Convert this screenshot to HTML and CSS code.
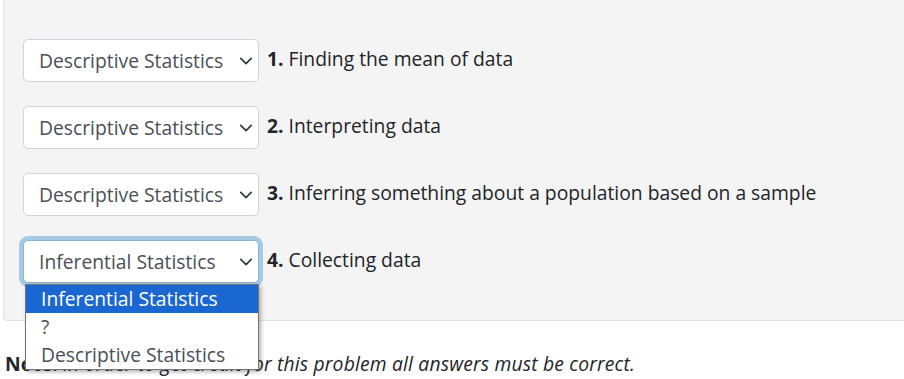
FILE: index.html
```html
<!DOCTYPE html>
<html>
<head>
<meta charset="utf-8">
<link rel="stylesheet" href="styles.css">
</head>
<body>
<div class="panel">
  <div class="row">
    <div class="select"><span class="value">Descriptive Statistics</span><svg class="chev" viewBox="0 0 16 16" width="14" height="14"><path d="M2 5l6 6 6-6" fill="none" stroke="#343a40" stroke-width="2" stroke-linecap="round" stroke-linejoin="round"/></svg></div>
    <div class="label"><b>1.</b> Finding the mean of data</div>
  </div>
  <div class="row">
    <div class="select"><span class="value">Descriptive Statistics</span><svg class="chev" viewBox="0 0 16 16" width="14" height="14"><path d="M2 5l6 6 6-6" fill="none" stroke="#343a40" stroke-width="2" stroke-linecap="round" stroke-linejoin="round"/></svg></div>
    <div class="label"><b>2.</b> Interpreting data</div>
  </div>
  <div class="row">
    <div class="select"><span class="value">Descriptive Statistics</span><svg class="chev" viewBox="0 0 16 16" width="14" height="14"><path d="M2 5l6 6 6-6" fill="none" stroke="#343a40" stroke-width="2" stroke-linecap="round" stroke-linejoin="round"/></svg></div>
    <div class="label"><b>3.</b> Inferring something about a population based on a sample</div>
  </div>
  <div class="row">
    <div class="select-wrap">
      <div class="select focused"><span class="value">Inferential Statistics</span><svg class="chev" viewBox="0 0 16 16" width="14" height="14"><path d="M2 5l6 6 6-6" fill="none" stroke="#343a40" stroke-width="2" stroke-linecap="round" stroke-linejoin="round"/></svg></div>
      <ul class="popup">
        <li class="opt active">Inferential Statistics</li>
        <li class="opt">?</li>
        <li class="opt">Descriptive Statistics</li>
      </ul>
    </div>
    <div class="label"><b>4.</b> Collecting data</div>
  </div>
</div>
<p class="note"><b>Note:</b> <i>In order to get credit for this problem all answers must be correct.</i></p>
</body>
</html>
```
FILE: styles.css
```css
html, body {
  margin: 0;
  padding: 0;
  background: #fff;
  overflow: hidden;
}
body {
  font-family: "Open Sans", "Noto Sans", sans-serif;
  font-size: 19.3px;
  color: #212529;
}
.panel {
  margin-left: 3px;
  background: #f4f4f4;
  border-left: 1px solid #e1e1e1;
  border-bottom: 1px solid #e1e1e1;
  border-bottom-left-radius: 4px;
  padding: 39px 0 37px 19px;
}
.row {
  display: flex;
  align-items: center;
  gap: 8px;
}
.row + .row {
  margin-top: 24px;
}
.select-wrap {
  position: relative;
}
.select {
  box-sizing: border-box;
  width: 236px;
  height: 43px;
  border: 1px solid #ced4da;
  border-radius: 5px;
  background: #fff;
  display: flex;
  align-items: center;
  justify-content: space-between;
  padding: 0 5px 0 15px;
  color: #495057;
  white-space: nowrap;
}
.select.focused {
  border-color: #86b3d8;
  box-shadow: 0 0 0 4px #a6c9e4;
}
.chev {
  display: block;
  flex: none;
}
.label {
  white-space: nowrap;
  padding-bottom: 4px;
}
.label b {
  font-weight: 700;
}
.popup {
  position: absolute;
  top: 44px;
  left: 2px;
  width: 234px;
  box-sizing: border-box;
  margin: 0;
  padding: 0;
  list-style: none;
  background: #fff;
  border: 1px solid #767676;
  box-shadow: 2px 2px 4px rgba(0, 0, 0, 0.3);
  z-index: 5;
  white-space: nowrap;
}
.opt {
  height: 28px;
  line-height: 28px;
  padding-left: 15px;
  color: #495057;
}
.opt.active {
  background: #1a67d2;
  color: #fff;
}
.note {
  margin: 29px 0 0 5px;
  white-space: nowrap;
}
.note i {
  font-style: italic;
  letter-spacing: 0.18px;
}
```
